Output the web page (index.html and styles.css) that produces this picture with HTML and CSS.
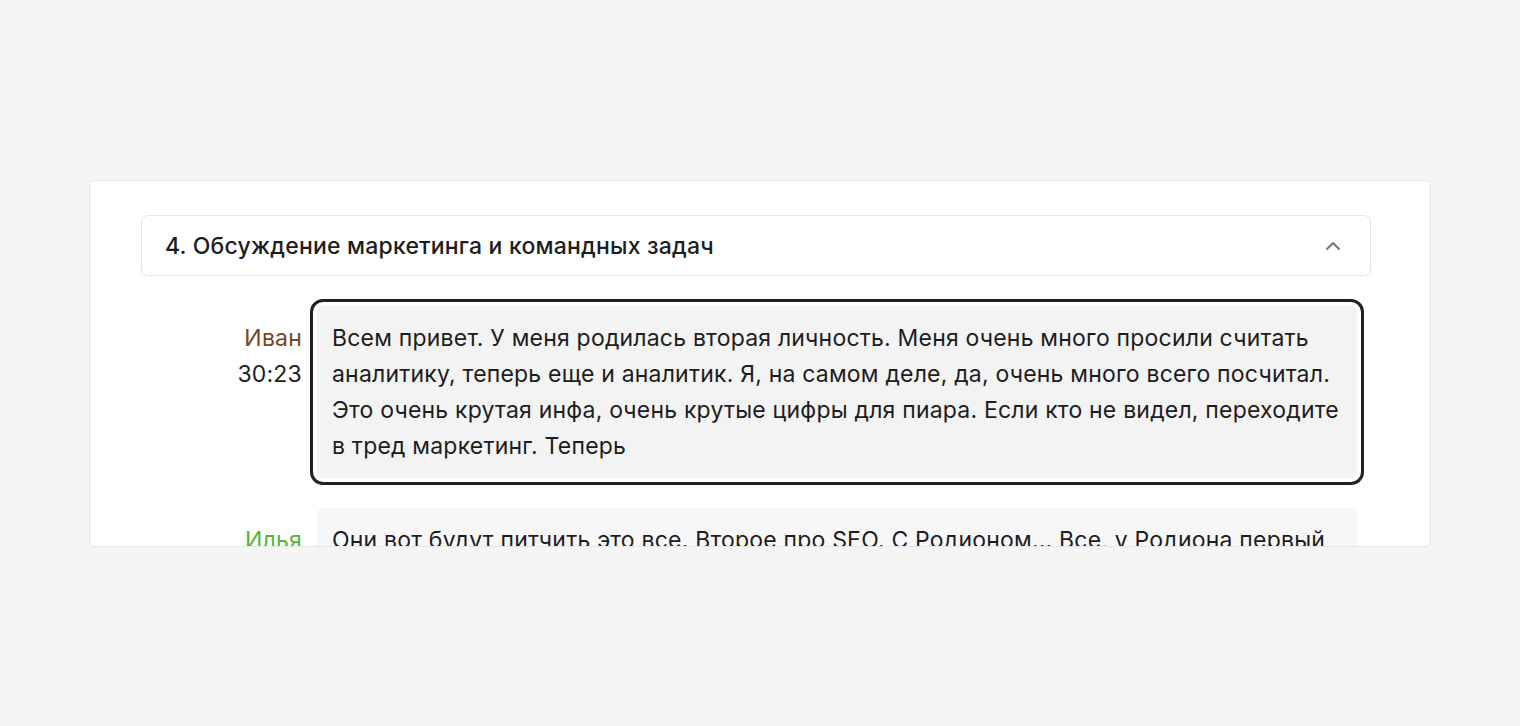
FILE: index.html
```html
<!DOCTYPE html>
<html lang="ru">
<head>
<meta charset="utf-8">
<link rel="stylesheet" href="styles.css">
</head>
<body>
<div class="card">
  <div class="section-head">
    <span class="section-title">4. Обсуждение маркетинга и командных задач</span>
    <svg class="chev" width="16" height="10" viewBox="0 0 16 10"><path d="M2 8 L8 2 L14 8" fill="none" stroke="#6b7280" stroke-width="1.8" stroke-linecap="round" stroke-linejoin="round"/></svg>
  </div>
  <div class="messages">
    <div class="msg">
      <div class="meta">
        <div class="name ivan">Иван</div>
        <div class="time">30:23</div>
      </div>
      <div class="bubble active">Всем привет. У меня родилась вторая личность. Меня очень много просили считать аналитику, теперь еще и аналитик. Я, на самом деле, да, очень много всего посчитал. Это очень крутая инфа, очень крутые цифры для пиара. Если кто не видел, переходите в тред маркетинг. Теперь</div>
    </div>
    <div class="msg">
      <div class="meta">
        <div class="name ilya">Илья</div>
        <div class="time">30:41</div>
      </div>
      <div class="bubble">Они вот будут питчить это все. Второе про SEO. С Родионом... Все, у Родиона первый день сегодня, и он уже сделал кучу всего полезного для нас, это очень круто.</div>
    </div>
  </div>
</div>
</body>
</html>
```

FILE: styles.css
```css
* { box-sizing: border-box; }
html, body { margin: 0; padding: 0; }
body {
  background: #f5f5f5;
  font-family: Inter, "Noto Sans", sans-serif;
  color: #1c1d21;
  padding-top: 180px;
  height: 726px;
  overflow: hidden;
}
.card {
  margin-left: 89px;
  width: 1342px;
  height: 367px;
  background: #ffffff;
  border: 1px solid #e6e6e6;
  border-radius: 6px;
  padding: 34px 59px 0 51px;
  overflow: hidden;
}
.section-head {
  height: 61px;
  border: 1px solid #e5e7eb;
  border-radius: 7px;
  display: flex;
  align-items: center;
  justify-content: space-between;
  padding: 0 29px 0 23px;
}
.section-title {
  font-size: 23px;
  font-weight: 500;
  letter-spacing: 0.2px;
  color: #1c1d21;
}
.chev { display: block; }
.messages {
  display: flex;
  flex-direction: column;
  gap: 30px;
  padding-top: 30px;
  padding-right: 14px;
}
.msg {
  display: grid;
  grid-template-columns: 161px 1fr;
  gap: 15px;
}
.meta {
  text-align: right;
  padding-top: 14px;
  font-size: 23px;
  letter-spacing: 0.2px;
  line-height: 36px;
}
.name.ivan { color: #7a461c; }
.name.ilya { color: #55b536; }
.time { color: #1c1d21; }
.bubble {
  background: #f7f7f8;
  border-radius: 6px;
  padding: 14px 9px 14px 15px;
  font-size: 23px;
  letter-spacing: 0.2px;
  line-height: 36px;
  color: #1c1d21;
}
.bubble.active {
  background: #f3f3f3;
  outline: 3px solid #1f2125;
  outline-offset: 4px;
}
```
